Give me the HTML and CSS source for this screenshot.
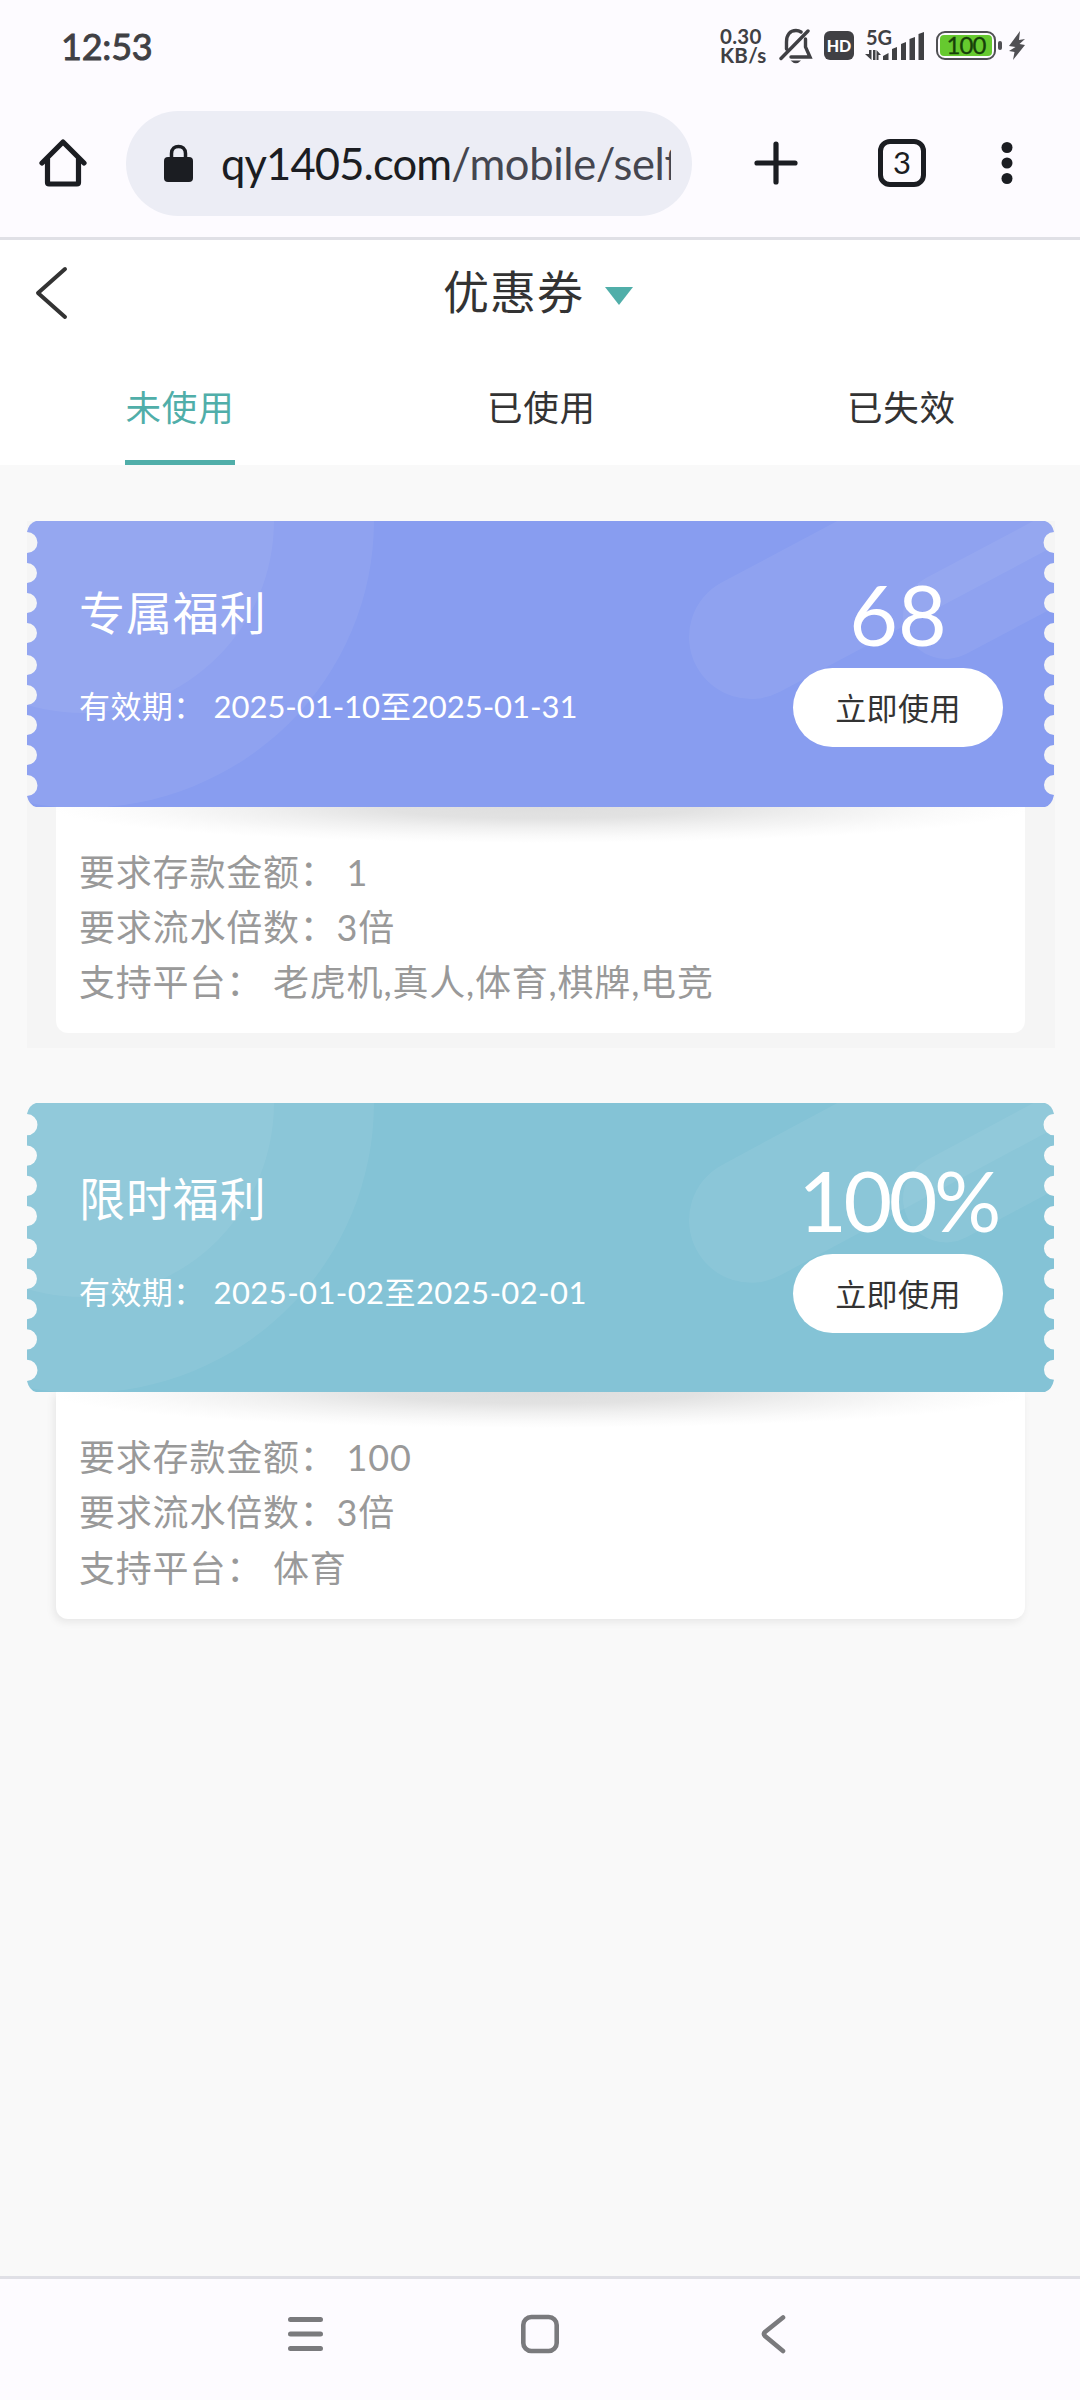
FILE: index.html
```html
<!DOCTYPE html>
<html lang="zh-CN">
<head>
<meta charset="utf-8">
<title>优惠券</title>
<link rel="stylesheet" href="styles.css">
</head>
<body>
<svg class="defs" width="0" height="0" aria-hidden="true">
  <defs>
    <clipPath id="ticket">
      <path d="M9 0H1018Q1025 2 1027 11A10 10 0 0 0 1027 32V42A10 10 0 0 0 1027 62V72A10 10 0 0 0 1027 92V102A10 10 0 0 0 1027 122V134A10 10 0 0 0 1027 154V164A10 10 0 0 0 1027 184V194A10 10 0 0 0 1027 214V224A10 10 0 0 0 1027 244V254A10 10 0 0 0 1027 274Q1025 284 1018 286H9Q2 284 0 275A10 10 0 0 0 0 254V244A10 10 0 0 0 0 224V214A10 10 0 0 0 0 194V184A10 10 0 0 0 0 164V154A10 10 0 0 0 0 134V122A10 10 0 0 0 0 102V92A10 10 0 0 0 0 72V62A10 10 0 0 0 0 42V32A10 10 0 0 0 0 11Q2 2 9 0Z"/>
    </clipPath>
    <g id="ticket-art" clip-path="url(#ticket)">
      <rect width="1027" height="286" fill="currentColor"/>
      <g fill="#fff" fill-opacity=".06">
        <ellipse cx="55" cy="0" rx="292" ry="287"/>
        <ellipse cx="55" cy="0" rx="192" ry="192"/>
      </g>
      <g stroke="#fff" stroke-opacity=".06" stroke-linecap="round">
        <path d="M724 116L1189 -131" stroke-width="124"/>
        <path d="M919 95L1200 -54" stroke-width="86"/>
      </g>
    </g>
  </defs>
</svg>

<div class="phone">
  <header class="status">
    <span class="time">12:53</span>
    <div class="indicators">
      <div class="speed"><span>0.30</span><span>KB/s</span></div>
      <svg class="i-bell" width="34" height="36" viewBox="0 0 34 36" fill="none" stroke="#404044" stroke-width="3.4" stroke-linecap="round">
        <path d="M7.500 21V14C7.500 7 11 2.500 17 2.500C19 2.500 20.500 3 22 4M26.500 11V19L31 29H12M2 30.500L29 3"/>
        <path d="M11.500 32.500H22Q17 38 11.500 32.500Z" fill="#404044" stroke="none"/>
      </svg>
      <span class="hd">HD</span>
      <div class="signal">
        <span>5G</span>
        <svg width="60" height="30" viewBox="0 0 60 30" fill="#404044">
          <path d="M4 20H6.500V30L0 24H4ZM8 20H10.500V30H8ZM11.500 20L16 25H13.500V30H11.500ZM18 26L23.500 23V30H18ZM27 19L32 17V30H27ZM36 14L41 12V30H36ZM44.500 9L50 7V30H44.500ZM53.500 4L59 2V30H53.500Z"/>
        </svg>
      </div>
      <div class="battery"><span>100</span></div>
      <svg class="i-bolt" width="18" height="30" viewBox="0 0 18 30" fill="#505054"><path d="M12 0L1 15L7.500 16L1 20L6.500 21L5 29L17 14L11.500 13L17 8L11 9Z"/></svg>
    </div>
  </header>

  <div class="browser">
    <svg class="i-home" width="48" height="50" viewBox="0 0 48 50" fill="none" stroke="#1b1d22" stroke-width="5.200" stroke-linecap="round" stroke-linejoin="round"><path d="M3 25L24 4L45 25M8.500 21V44.500Q8.500 46 10 46H38Q39.500 46 39.500 44.500V21"/></svg>
    <div class="omnibox">
      <svg class="i-lock" width="29" height="38" viewBox="0 0 29 38"><rect y="13" width="29" height="25" rx="4" fill="#1b1d22"/><path d="M7.500 15V9.500C7.500 0 21.500 0 21.500 9.500V15" fill="none" stroke="#1b1d22" stroke-width="3.500"/></svg>
      <div class="url"><span class="host">qy1405.com</span>/mobile/self</div>
    </div>
    <svg class="i-plus" width="44" height="44" viewBox="0 0 44 44" stroke="#1b1d22" stroke-width="5.200" stroke-linecap="round"><path d="M22 3V41M3 22H41"/></svg>
    <span class="tabcount">3</span>
    <svg class="i-more" width="12" height="44" viewBox="0 0 12 44" fill="#1b1d22"><circle cx="6" cy="6.500" r="5.500"/><circle cx="6" cy="22" r="5.500"/><circle cx="6" cy="37.500" r="5.500"/></svg>
  </div>

  <div class="topbar">
    <div class="titlebar">
      <svg class="i-back" width="34" height="54" viewBox="0 0 34 54" fill="none" stroke="#333" stroke-width="4" stroke-linecap="round" stroke-linejoin="round"><path d="M30 3L3 27L30 51"/></svg>
      <h1>优惠券</h1>
      <svg class="i-caret" width="28" height="18" viewBox="0 0 28 18" fill="#50aea9"><path d="M0 0H28L14 18Z"/></svg>
    </div>
    <nav class="tabs">
      <a class="tab active">未使用</a>
      <a class="tab">已使用</a>
      <a class="tab">已失效</a>
    </nav>
  </div>

  <main class="coupons">
    <article class="coupon exclusive">
      <section class="ticket">
        <svg class="art" viewBox="0 0 1027 286" preserveAspectRatio="none"><use href="#ticket-art"/></svg>
        <div class="info">
          <h2>专属福利</h2>
          <p class="period"><span>有效期：</span><span>2025-01-10至2025-01-31</span></p>
        </div>
        <div class="action">
          <strong class="amount">68</strong>
          <button class="use">立即使用</button>
        </div>
      </section>
      <section class="terms">
        <p>要求存款金额： 1</p>
        <p>要求流水倍数：3倍</p>
        <p>支持平台： 老虎机,真人,体育,棋牌,电竞</p>
      </section>
    </article>

    <article class="coupon limited">
      <section class="ticket">
        <svg class="art" viewBox="0 0 1027 286" preserveAspectRatio="none"><use href="#ticket-art"/></svg>
        <div class="info">
          <h2>限时福利</h2>
          <p class="period"><span>有效期：</span><span>2025-01-02至2025-02-01</span></p>
        </div>
        <div class="action">
          <strong class="amount">100%</strong>
          <button class="use">立即使用</button>
        </div>
      </section>
      <section class="terms">
        <p>要求存款金额： 100</p>
        <p>要求流水倍数：3倍</p>
        <p>支持平台： 体育</p>
      </section>
    </article>
  </main>

  <footer class="navbar">
    <svg width="40" height="40" viewBox="0 0 40 40" stroke="#7a7a7d" stroke-width="5" stroke-linecap="round"><path d="M4.500 5.500H34.500M4.500 20H34.500M4.500 34.500H34.500"/></svg>
    <svg width="40" height="40" viewBox="0 0 40 40" fill="none" stroke="#7a7a7d" stroke-width="4.600"><rect x="3.300" y="3" width="33.400" height="34" rx="8"/></svg>
    <svg width="40" height="40" viewBox="0 0 40 40" fill="none" stroke="#7a7a7d" stroke-width="4.600" stroke-linecap="round"><path d="M29 3.500L11 18Q9 20 11 22L29 37"/></svg>
  </footer>
</div>
</body>
</html>
```
FILE: styles.css
```css
* { box-sizing: border-box; margin: 0; padding: 0; }

body {
  width: 1080px;
  height: 2400px;
  overflow: hidden;
  background: #fdfbff;
  font-family: Lato, "Noto Sans CJK SC", sans-serif;
  color: #333;
}

svg { display: block; flex: none; }
.defs { position: absolute; }

.phone { display: flex; flex-direction: column; height: 2400px; }

/* status bar */
.status {
  display: flex;
  justify-content: space-between;
  height: 92px;
  padding: 0 54px 0 61px;
  color: #404044;
}
.time { font-size: 36px; line-height: 92px; font-weight: 400; -webkit-text-stroke: .9px #404044; letter-spacing: -.2px; }
.indicators { display: flex; align-items: flex-start; }
.speed {
  display: flex;
  flex-direction: column;
  width: 59px;
  margin-top: 27px;
  font-size: 20.500px;
  line-height: 18.500px;
  font-weight: 700;
  letter-spacing: .3px;
}
.i-bell { margin-top: 28px; }
.hd {
  width: 30px;
  height: 29px;
  margin: 31px 0 0 11px;
  border-radius: 6px;
  background: #404044;
  color: #fff;
  font-size: 16px;
  font-weight: 900;
  line-height: 29px;
  text-align: center;
}
.signal { display: grid; margin: 29px 0 0 11px; }
.signal > * { grid-area: 1 / 1; }
.signal span { font-size: 20px; line-height: 17px; font-weight: 700; padding-left: 1px; }
.signal svg { margin-top: 1px; }
.battery {
  display: flex;
  width: 60px;
  height: 29px;
  margin: 31px 0 0 11px;
  padding: 2px;
  border: 2.500px solid #505054;
  border-radius: 9px;
  position: relative;
}
.battery::after {
  content: "";
  position: absolute;
  right: -8px;
  top: 7.500px;
  width: 4px;
  height: 9px;
  border-radius: 2px;
  background: #505054;
}
.battery span {
  flex: 1;
  border-radius: 4px;
  background: #66c92f;
  color: #17400a;
  font-size: 24px;
  line-height: 20px;
  text-align: center;
  letter-spacing: -1px;
  -webkit-text-stroke: .3px #17400a;
}
.i-bolt { margin: 31px 0 0 12px; }

/* browser toolbar */
.browser {
  display: flex;
  align-items: center;
  height: 148px;
  padding: 0 67px 3px 39px;
  border-bottom: 3px solid #e0e0e6;
}
.omnibox {
  display: flex;
  align-items: center;
  width: 566px;
  height: 105px;
  margin-left: 39px;
  padding: 0 21px 0 38px;
  border-radius: 53px;
  background: #ecedf5;
}
.url {
  flex: 1;
  margin-left: 28px;
  overflow: hidden;
  white-space: nowrap;
  font-size: 43.500px;
  line-height: 64px;
  letter-spacing: -.35px;
  color: #45464f;
}
.host { color: #1b1d22; letter-spacing: -.85px; }
.i-plus { margin-left: 62px; }
.tabcount {
  width: 48px;
  height: 48px;
  margin-left: 80px;
  border: 5px solid #1b1d22;
  border-radius: 12px;
  color: #1b1d22;
  font-size: 31px;
  line-height: 37px;
  text-align: center;
}
.i-more { margin-left: auto; }

/* page header */
.topbar { height: 225px; background: #fff; }
.titlebar {
  display: flex;
  align-items: center;
  height: 105px;
  padding-left: 35px;
}
.titlebar h1 { margin-left: 374px; margin-top: -2px; font-size: 46px; font-weight: 400; letter-spacing: 1px; line-height: 60px; }
.i-caret { margin: 6px 0 0 21px; }
.tabs { display: flex; height: 120px; }
.tab {
  width: 110px;
  margin: 0 125px;
  padding-top: 37px;
  border-bottom: 5px solid transparent;
  font-size: 35.500px;
  line-height: 52px;
  letter-spacing: .8px;
  text-align: center;
  white-space: nowrap;
}
.tab + .tab { text-indent: 2px; }
.tab.active { color: #50aea9; border-color: #50aea9; }

/* coupon list */
.coupons {
  flex: 1;
  padding: 56px 25px 0 27px;
  background: #f9f9f9;
}
.coupon { margin-bottom: 55px; }
.exclusive { height: 527px; background: #f5f5f5; }
.ticket {
  position: relative;
  display: flex;
  justify-content: space-between;
  width: 1027px;
  height: 286px;
  padding: 0 51px 0 52px;
  color: #fff;
}
.art { position: absolute; inset: 0; width: 100%; height: 100%; }
.exclusive .art { color: #889df0; }
.limited .art { color: #84c3d6; }
.limited .ticket { height: 289px; }
.info, .action { position: relative; }
.info { padding-top: 61px; }
.limited .info { padding-top: 65px; }
.info h2 { font-size: 46px; line-height: 62px; font-weight: 400; letter-spacing: .9px; }
.period { display: flex; margin-top: 37px; font-size: 31px; line-height: 50px; letter-spacing: .4px; }
.period span + span { margin-left: 9px; }
.exclusive .period span + span { letter-spacing: -.05px; }
.action { width: 210px; display: flex; flex-direction: column; align-items: center; }
.amount {
  height: 147px;
  padding-top: 43px;
  font-size: 84px;
  line-height: 100px;
  font-weight: 400;
}
.limited .amount { height: 151px; padding-top: 47px; letter-spacing: -3.500px; }
.use {
  width: 210px;
  height: 79px;
  padding-bottom: 3px;
  border: 0;
  border-radius: 40px;
  background: #fff;
  color: #333;
  font: inherit;
  font-size: 31px;
  letter-spacing: .4px;
}
.terms {
  width: 969px;
  height: 226px;
  margin-left: 29px;
  padding: 38px 0 0 23px;
  border-radius: 0 0 12px 12px;
  background: radial-gradient(ellipse 490px 36px at 50% 0, #dedede 0, #e2e2e2 32%, #f0f0f0 58%, #fafafa 82%, #fff 100%) #fff;
  color: #999;
  font-size: 36px;
  line-height: 55px;
  letter-spacing: .8px;
}
.limited .terms { height: 227px; line-height: 55.300px; box-shadow: -2px 3px 8px rgba(0, 0, 0, .08); }

/* system navigation */
.navbar {
  display: flex;
  justify-content: center;
  gap: 194px;
  height: 124px;
  padding-top: 35px;
  border-top: 3px solid #e0e0e6;
}
```
